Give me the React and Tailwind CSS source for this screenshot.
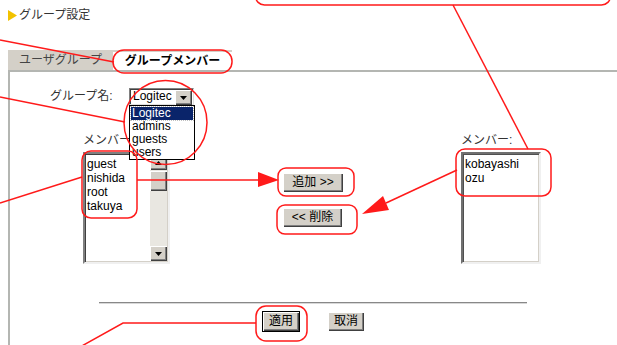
import React from "react";

const raised =
  "bg-[#d4d0c8] shadow-[inset_1px_1px_0_#ffffff,inset_-1px_-1px_0_#404040,inset_-2px_-2px_0_#808080]";

function ScrollBtn({ up }) {
  return (
    <div className={`w-[17px] h-[15px] flex items-center justify-center ${raised}`}>
      <svg width="7" height="4" viewBox="0 0 7 4">
        {up ? <polygon points="0,4 7,4 3.5,0" fill="#000" /> : <polygon points="0,0 7,0 3.5,4" fill="#000" />}
      </svg>
    </div>
  );
}

function Btn({ children, w, def }) {
  return (
    <div
      className={`h-[19px] ${w} ${raised} ${def ? "outline outline-1 outline-black" : ""} flex items-center justify-center text-[12px] leading-[19px] text-black`}
    >
      {children}
    </div>
  );
}

export default function App() {
  return (
    <div className="relative w-[617px] h-[345px] overflow-hidden bg-white text-[#222] font-['Liberation_Sans','Noto_Sans_CJK_JP',sans-serif]">
      {/* title */}
      <div className="h-[50px] pt-[9px] pl-[8px] flex items-start">
        <div className="flex items-center h-[13px] gap-[2px]">
          <svg width="9" height="11" viewBox="0 0 9 11">
            <polygon points="0,0 9,5.5 0,11" fill="#f2c200" />
          </svg>
          <span className="text-[12px] leading-[13px] text-[#333]">グループ設定</span>
        </div>
      </div>

      {/* tabs */}
      <div className="ml-[8px] flex h-[20px] w-[224px] bg-[#d4d0c8]">
        <div className="w-[105px] text-center text-[12px] leading-[20px] text-[#444]">ユーザグループ</div>
        <div className="w-[119px] mt-[2px] bg-white text-center text-[12px] leading-[18px] font-bold text-black">
          グループメンバー
        </div>
      </div>

      {/* panel */}
      <div className="ml-[8px] h-[275px] border-t-2 border-l-2 border-[#b4b6b2]">
        {/* group name row */}
        <div className="mt-[16px] flex h-[17px] items-center">
          <div className="ml-[40px] w-[79px] text-[12px] leading-[17px] text-[#333]">グループ名:</div>
          <div className="relative w-[65px] h-[17px] bg-white border border-t-[#808080] border-l-[#808080] border-r-[#e0e0e0] border-b-[#e0e0e0] shadow-[inset_1px_1px_0_#404040] flex items-center">
            <span className="pl-[3px] text-[12px] leading-[15px] text-black">Logitec</span>
            <div className="absolute right-[1px] top-[1px]">
              <ScrollBtn />
            </div>
            <div className="absolute left-[-1px] top-[16px] w-[66px] h-[55px] border border-black bg-white flex flex-col text-[12px] leading-[13px] text-black">
              <div className="mx-[1px] mt-[1px] pl-[1px] bg-[#0a246a] text-white outline outline-1 outline-dotted outline-[#c0c0c0]">Logitec</div>
              <div className="pl-[2px]">admins</div>
              <div className="pl-[2px]">guests</div>
              <div className="pl-[2px]">users</div>
            </div>
          </div>
        </div>

        {/* members row */}
        <div className="mt-[28px] flex">
          <div className="ml-[73px] flex flex-col">
            <div className="h-[19px] text-[12px] leading-[14px] text-[#333]">メンバー:</div>
            <div className="w-[87px] h-[112px] flex border-2 border-t-[#808080] border-l-[#808080] border-r-[#f0f0f0] border-b-[#f0f0f0] shadow-[inset_1px_1px_0_#404040,inset_-1px_-1px_0_#d4d0c8] bg-white">
              <div className="flex-1 pt-[3px] pl-[2px] text-[12px] leading-[14px] text-black">
                <div>guest</div>
                <div>nishida</div>
                <div>root</div>
                <div>takuya</div>
              </div>
              <div className="w-[17px] mr-[1px] my-[1px] flex flex-col bg-[#e9e7e1]">
                <ScrollBtn up />
                <div className={`h-[20px] mt-[1px] ${raised}`} />
                <div className="flex-1" />
                <ScrollBtn />
              </div>
            </div>
          </div>

          <div className="ml-[113px] mt-[40px] flex flex-col gap-[16px]">
            <Btn w="w-[60px]">追加 &gt;&gt;</Btn>
            <Btn w="w-[59px]">&lt;&lt; 削除</Btn>
          </div>

          <div className="ml-[118px] flex flex-col">
            <div className="h-[19px] text-[12px] leading-[14px] text-[#333]">メンバー:</div>
            <div className="w-[80px] h-[112px] border-2 border-t-[#707070] border-l-[#707070] border-r-[#f0f0f0] border-b-[#f0f0f0] shadow-[inset_1px_1px_0_#505050,inset_-1px_-1px_0_#d4d0c8] bg-white pt-[3px] pl-[2px] text-[12px] leading-[14px] text-black">
              <div>kobayashi</div>
              <div>ozu</div>
            </div>
          </div>
        </div>

        {/* separator */}
        <div className="ml-[89px] mt-[38px] w-[428px]">
          <div className="h-px bg-[#888888]" />
          <div className="h-px bg-[#d8d8d8]" />
        </div>

        <div className="mt-[8px] ml-[253px] flex gap-[29px]">
          <Btn w="w-[36px]" def>
            適用
          </Btn>
          <Btn w="w-[36px]">取消</Btn>
        </div>
      </div>

      {/* annotations */}
      <svg className="absolute left-0 top-0 pointer-events-none" width="617" height="345" viewBox="0 0 617 345">
        <g fill="none" stroke="#ff1a1a" strokeWidth="1.5">
          <rect x="255.5" y="-30" width="355" height="35" rx="9" />
          <line x1="453" y1="5" x2="528" y2="149" />
          <rect x="113" y="50" width="119" height="23" rx="11" />
          <line x1="0" y1="40" x2="114" y2="62" />
          <ellipse cx="165.5" cy="122.5" rx="41.5" ry="42" />
          <line x1="0" y1="97" x2="125" y2="122" />
          <rect x="82" y="151" width="55" height="67" rx="9" />
          <line x1="0" y1="203" x2="82" y2="177" />
          <line x1="137" y1="180" x2="260" y2="180" />
          <rect x="278" y="168" width="76" height="28" rx="8" />
          <rect x="277" y="205" width="80" height="29" rx="8" />
          <rect x="456" y="149" width="95" height="47" rx="9" />
          <line x1="457" y1="170" x2="386" y2="203" />
          <rect x="256" y="306" width="51" height="35" rx="10" />
          <polyline points="256,323 123,323 80,347" />
        </g>
        <polygon points="258,172 279,180 258,187" fill="#ff1a1a" />
        <polygon points="362,214 389,210 383,196" fill="#ff1a1a" />
      </svg>
    </div>
  );
}
